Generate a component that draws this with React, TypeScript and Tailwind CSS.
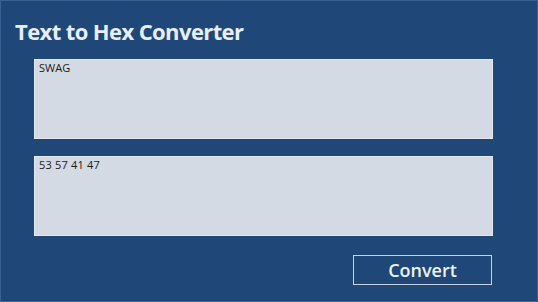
import React from "react";

const App: React.FC = () => {
  return (
    <div
      className="w-[538px] h-[302px] bg-[#1f4778] border border-[#3b6190] overflow-hidden"
      style={{ fontFamily: '"Open Sans", "Noto Sans", sans-serif' }}
    >
      <h1 className="pl-[14px] pt-[16px] text-[22px] leading-[29px] font-bold text-[#e8eef5] tracking-[-0.6px]">
        Text to Hex Converter
      </h1>

      <div className="ml-[33px] mt-[13px] w-[459px] flex flex-col gap-[17px]">
        <div className="h-[80px] bg-[#d3dae3] border border-[#e4e9ef] px-[4px] pt-[1px] leading-[14px] text-[11px] text-[#1a1a1a]">
          SWAG
        </div>
        <div className="h-[80px] bg-[#d3dae3] border border-[#e4e9ef] px-[4px] pt-[1px] leading-[14px] text-[11px] text-[#1a1a1a] tracking-[0.2px]">
          53 57 41 47
        </div>
      </div>

      <div className="flex justify-end pr-[45px] mt-[19px]">
        <button className="w-[139px] h-[30px] border border-[#c9d4e2] text-[18px] leading-none font-semibold text-[#eef2f7]">
          Convert
        </button>
      </div>
    </div>
  );
};

export default App;
